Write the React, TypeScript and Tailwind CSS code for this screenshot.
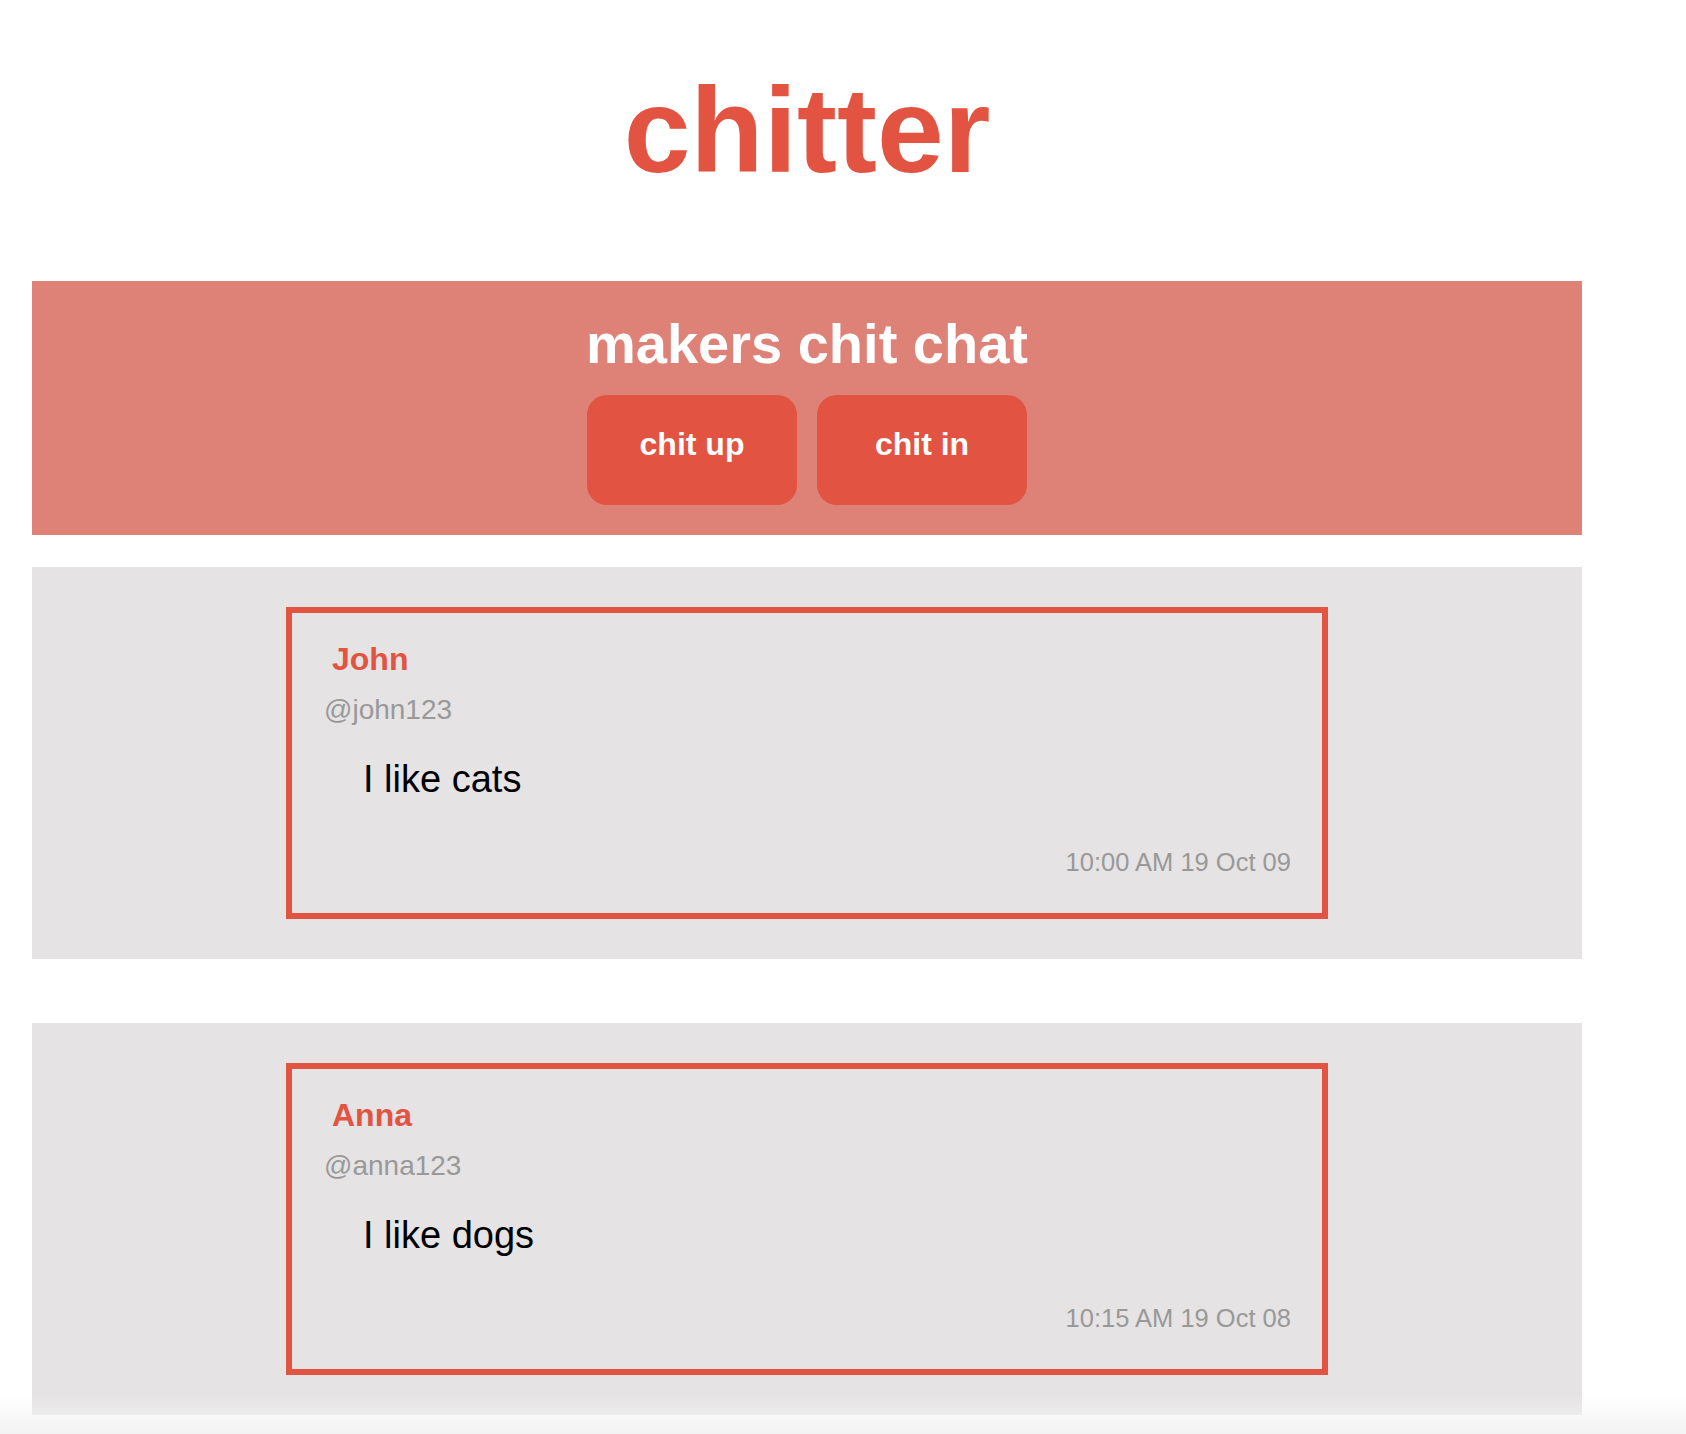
import React from "react";

type Peep = { name: string; handle: string; text: string; time: string };

const peeps: Peep[] = [
  { name: "John", handle: "@john123", text: "I like cats", time: "10:00 AM 19 Oct 09" },
  { name: "Anna", handle: "@anna123", text: "I like dogs", time: "10:15 AM 19 Oct 08" },
];

function PeepCard({ p }: { p: Peep }) {
  return (
    <div className="bg-[#e5e3e4] py-[40px] flex justify-center">
      <div className="w-[1042px] h-[312px] border-[6px] border-[#e25342] flex flex-col pl-[32px] pr-[31px]">
        <div className="mt-[30px] ml-[8px] text-[32px] leading-none font-bold text-[#e25342]">{p.name}</div>
        <div className="mt-[21px] text-[28px] leading-none text-[#999999]">{p.handle}</div>
        <div className="mt-[36px] ml-[39px] text-[38px] leading-none text-black">{p.text}</div>
        <div className="mt-[52px] text-right text-[25.5px] leading-none text-[#999999]">{p.time}</div>
      </div>
    </div>
  );
}

export default function App() {
  return (
    <div className="relative min-h-[1434px] bg-white font-['Liberation_Sans',Arial,Helvetica,sans-serif] overflow-hidden">
      <div className="ml-[32px] w-[1550px] flex flex-col">
        <h1 className="pt-[70px] text-center text-[120px] leading-none font-bold text-[#e25342]">
          chitter
        </h1>
        <div className="mt-[91px] bg-[#de8177] pt-[35px] pb-[30px] flex flex-col items-center">
          <h2 className="text-[56px] leading-none font-bold text-white">makers chit chat</h2>
          <div className="mt-[23px] flex gap-[20px]">
            <button className="w-[210px] h-[110px] rounded-[20px] bg-[#e25342] text-white font-bold text-[32px] leading-none flex items-center justify-center pb-[12px]">
              chit up
            </button>
            <button className="w-[210px] h-[110px] rounded-[20px] bg-[#e25342] text-white font-bold text-[32px] leading-none flex items-center justify-center pb-[12px]">
              chit in
            </button>
          </div>
        </div>
        <div className="mt-[32px] flex flex-col gap-[64px]">
          {peeps.map((p) => (
            <PeepCard key={p.handle} p={p} />
          ))}
        </div>
      </div>
      <div className="pointer-events-none absolute left-0 right-0 bottom-0 h-[40px] bg-gradient-to-b from-transparent to-[#f3f3f3]" />
    </div>
  );
}
